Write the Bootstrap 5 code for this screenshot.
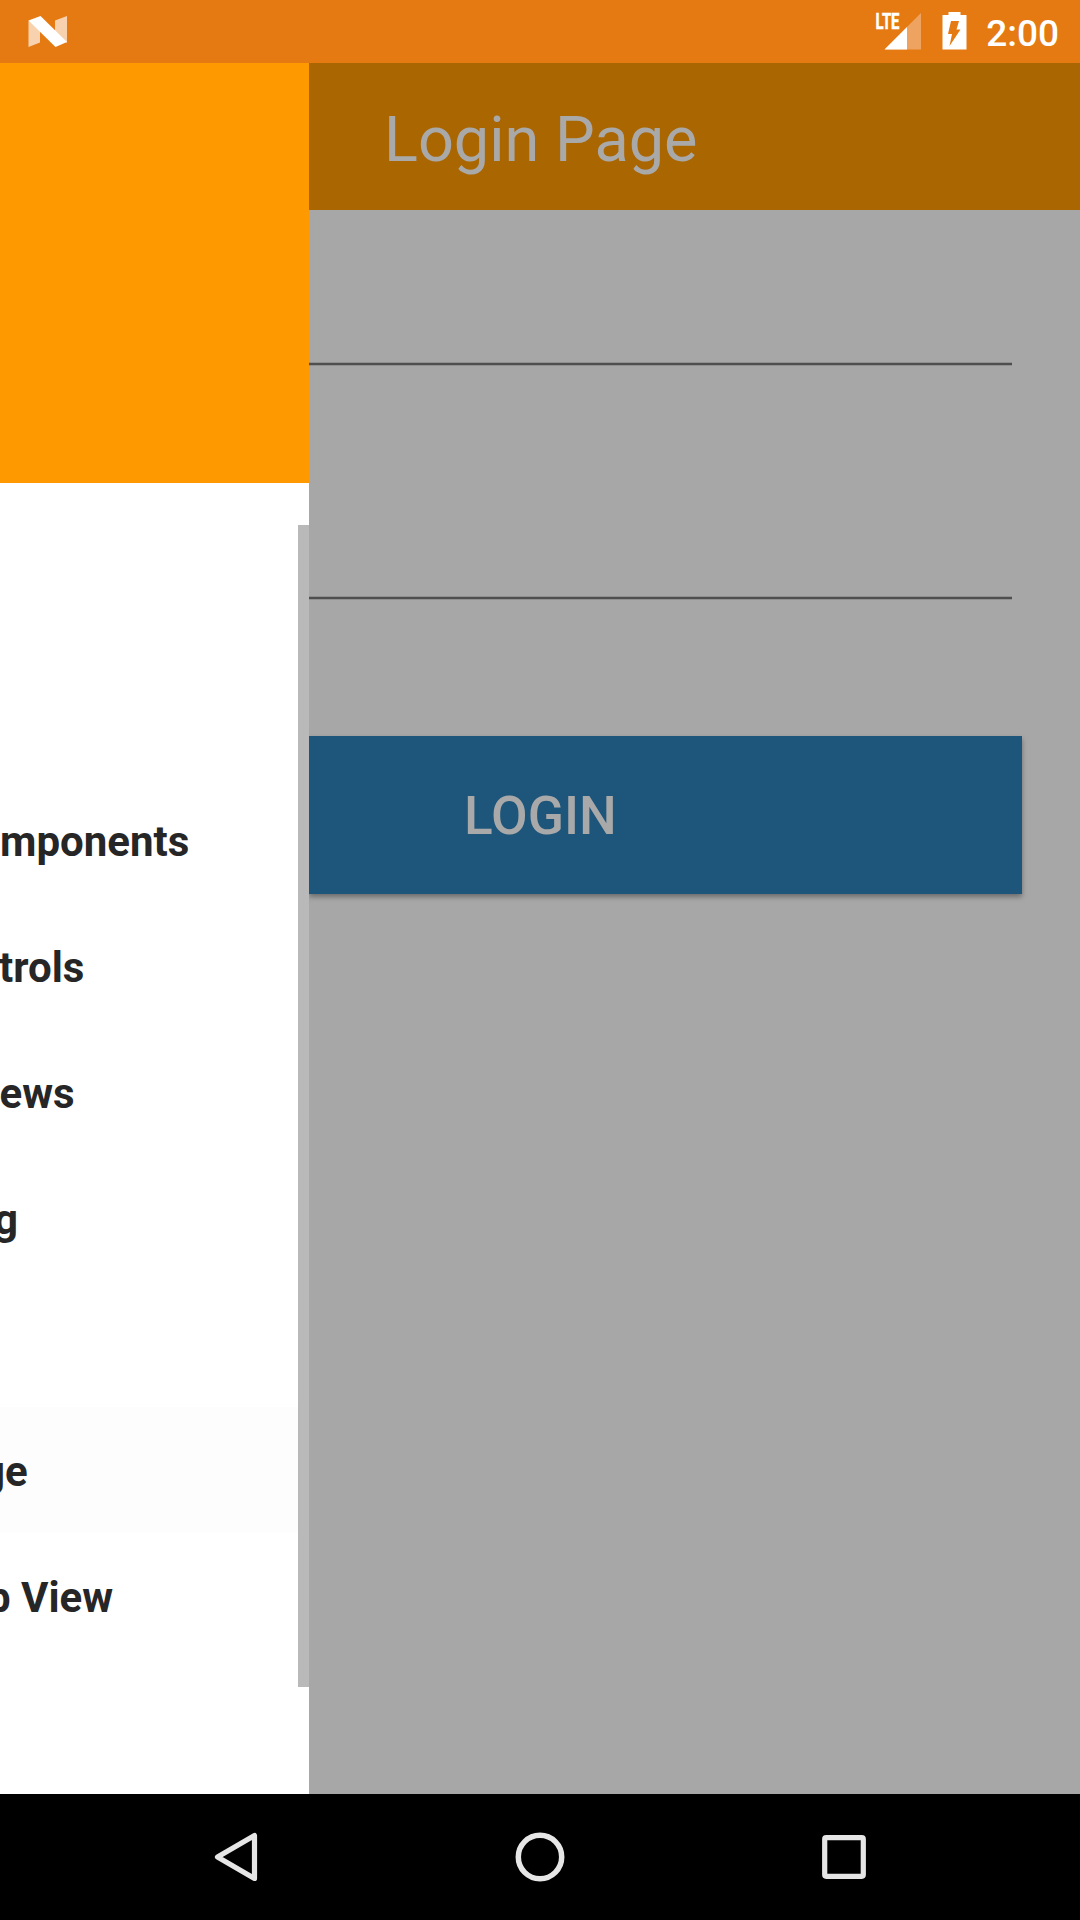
<!DOCTYPE html>
<html lang="en">
<head>
<meta charset="utf-8">
<meta name="viewport" content="width=device-width, initial-scale=1">
<title>Login Page</title>
<link href="https://cdn.jsdelivr.net/npm/bootstrap@5.3.0/dist/css/bootstrap.min.css" rel="stylesheet">
<style>
body { font-family: Roboto, "Noto Sans", sans-serif; background: #a7a7a7; }
.screen { width: 1080px; height: 1920px; }
.status { height: 63px; background: #e57a12; }
.status .clock { font-size: 37px; font-weight: 500; line-height: 63px; margin: 2px 21px 0 0; }
.drawer { width: 309px; background: #fff; }
.drawer-head { height: 420px; background: #ff9900; }
.drawer-menu { padding-top: 294px; }
.entry { height: 126px; line-height: 130px; font-size: 42px; font-weight: 700; color: #262626; white-space: pre; overflow: hidden; }
.entry.current { background: #fdfdfd; }
.thumb { left: 298px; top: 462px; width: 11px; height: 1162px; background: #b9b9b9; }
.content-pane { background: #a7a7a7; }
.topbar { height: 147px; background: #aa6600; color: #a9a9a9; font-size: 63px; line-height: 153px; padding-left: 75px; }
.entry-field { width: 703px; border: 0; border-radius: 0; padding: 0; background: linear-gradient(#909090 0 1px, #4f4f4f 1px 3px, #909090 3px) bottom / 100% 4px no-repeat; }
.user-field { height: 156px; }
.pass-field { height: 234px; }
.login-btn { width: 713px; height: 158px; margin-top: 136px; padding: 3px 0 0 155px; border: 0; border-radius: 0; background: #1d557b; color: #a9a9a9; font-size: 53.2px; font-weight: 500; line-height: 155px; text-align: left; box-shadow: 0 3px 5px rgba(0,0,0,.35); }
.softkeys { height: 126px; padding: 0 211px; }
</style>
<script src="https://cdn.jsdelivr.net/npm/bootstrap@5.3.0/dist/js/bootstrap.bundle.min.js"></script>
</head>
<body>
<div class="screen d-flex flex-column overflow-hidden">
  <header class="status d-flex justify-content-between text-white flex-shrink-0">
    <svg width="90" height="63" viewBox="0 0 90 63" aria-hidden="true">
      <path d="M28.5 20.5 40 27V42.5L28.5 47ZM55 20.5 67 16V43L55 33Z" fill="#f8d2ae"/>
      <path d="M28.5 20.5 40.5 16 67 42 55.5 47Z" fill="#fff"/>
    </svg>
    <div class="d-flex">
      <svg width="116" height="63" viewBox="870 0 116 63" aria-hidden="true">
        <path d="M921 13V49.5H884.500Z" fill="#eea460"/>
        <path d="M907 27V49.5H884.500Z" fill="#fff"/>
        <text x="875.5" y="29" font-size="21.5" font-weight="700" fill="#fff" stroke="#fff" stroke-width=".5" textLength="24" lengthAdjust="spacingAndGlyphs">LTE</text>
        <path d="M948.500 12h12v3h6v34.500h-24V15h6Z" fill="#fff"/>
        <path d="M951 21h8l-2.500 8.500h4L949.500 46l2.500-12h-4Z" fill="#e57a12"/>
      </svg>
      <span class="clock">2:00</span>
    </div>
  </header>

  <main class="d-flex flex-grow-1">
    <aside class="drawer position-relative flex-shrink-0">
      <div class="drawer-head"></div>
      <nav class="drawer-menu">
        <div class="entry">mponents</div>
        <div class="entry" style="text-indent:-1px">trols</div>
        <div class="entry" style="text-indent:-.5px">ews</div>
        <div class="entry" style="text-indent:-6px">g</div>
        <div class="entry"></div>
        <div class="entry current" style="text-indent:-19px">ge</div>
        <div class="entry" style="text-indent:-13px">b View</div>
      </nav>
      <div class="thumb position-absolute"></div>
    </aside>
    <section class="content-pane flex-grow-1">
      <div class="topbar">Login Page</div>
      <form class="d-flex flex-column align-items-start">
        <input class="form-control entry-field user-field" type="text" aria-label="Username">
        <input class="form-control entry-field pass-field" type="password" aria-label="Password">
        <button class="btn login-btn" type="button">LOGIN</button>
      </form>
    </section>
  </main>

  <footer class="softkeys bg-black d-flex justify-content-between align-items-center flex-shrink-0">
    <svg width="50" height="50" fill="none" stroke="#e6e6e6" aria-hidden="true"><path d="M43.500 3.500V46.500L6.500 25Z" stroke-width="5.200" stroke-linejoin="round"/></svg>
    <svg width="50" height="50" fill="none" stroke="#e6e6e6" aria-hidden="true"><circle cx="25" cy="25" r="21.700" stroke-width="5.500"/></svg>
    <svg width="50" height="50" fill="none" stroke="#e6e6e6" aria-hidden="true"><rect x="5.700" y="5.700" width="38.600" height="38.600" rx="1.500" stroke-width="5.200"/></svg>
  </footer>
</div>
</body>
</html>
